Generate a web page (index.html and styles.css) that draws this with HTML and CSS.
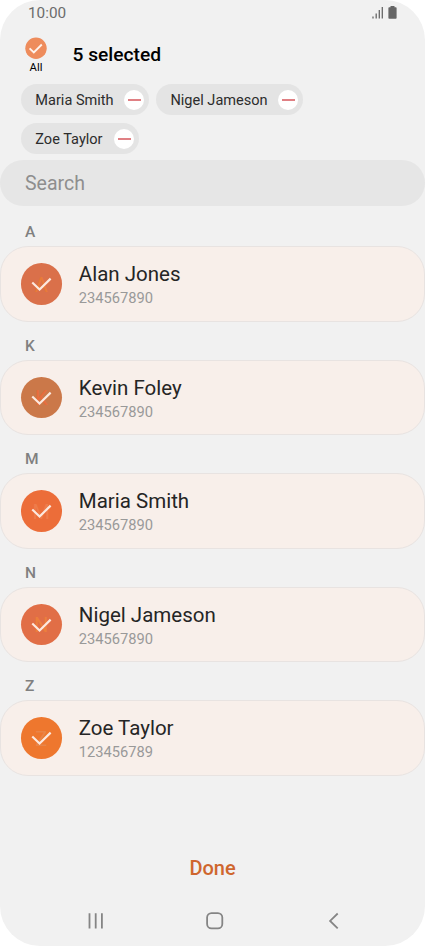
FILE: index.html
```html
<!DOCTYPE html>
<html lang="en">
<head>
<meta charset="utf-8">
<title>Select contacts</title>
<link rel="stylesheet" href="styles.css">
</head>
<body>
<main class="phone">
  <div class="status">
    <span class="time">10:00</span>
    <svg class="status-icons" width="26" height="14" viewBox="0 0 26 14">
      <path d="M1 10.5V12.5M4.2 7.5V12.5M7.3 4V12.5M10.3 1V12.5" stroke="#666" stroke-width="1.3" fill="none"/>
      <path d="M18.5 0h4v1.2h1.3q.8 0 .8.8v10q0 .8-.8.8h-6.6q-.8 0-.8-.8V2q0-.8.8-.8h1.3z" fill="#666"/>
    </svg>
  </div>
  <header class="header">
    <div class="all">
      <svg width="22" height="22" viewBox="0 0 22 22"><circle cx="11" cy="11.3" r="10.7" fill="#ee8c5c"/><path d="M4.6 11.4l4.2 4 8-7.9" fill="none" stroke="#fff3ec" stroke-width="1.9"/></svg>
      <span class="all-label">All</span>
    </div>
    <h1 class="title">5 selected</h1>
  </header>
  <div class="chips">
    <div class="chip"><span>Maria Smith</span><i class="remove"></i></div>
    <div class="chip"><span>Nigel Jameson</span><i class="remove"></i></div>
    <div class="chip"><span>Zoe Taylor</span><i class="remove"></i></div>
  </div>
  <div class="search">Search</div>
  <section class="group">
    <h2 class="letter">A</h2>
    <div class="card">
      <div class="avatar avatar-a"><span class="initial">A</span><svg class="check" viewBox="0 0 42 42"><path d="M11.4 19.7l7.4 7.1 11.2-11"/></svg></div>
      <div class="info"><div class="name">Alan Jones</div><div class="number">234567890</div></div>
    </div>
  </section>
  <section class="group">
    <h2 class="letter">K</h2>
    <div class="card">
      <div class="avatar avatar-k"><span class="initial">K</span><svg class="check" viewBox="0 0 42 42"><path d="M11.4 19.7l7.4 7.1 11.2-11"/></svg></div>
      <div class="info"><div class="name">Kevin Foley</div><div class="number">234567890</div></div>
    </div>
  </section>
  <section class="group">
    <h2 class="letter">M</h2>
    <div class="card">
      <div class="avatar avatar-m"><span class="initial">M</span><svg class="check" viewBox="0 0 42 42"><path d="M11.4 19.7l7.4 7.1 11.2-11"/></svg></div>
      <div class="info"><div class="name">Maria Smith</div><div class="number">234567890</div></div>
    </div>
  </section>
  <section class="group">
    <h2 class="letter">N</h2>
    <div class="card">
      <div class="avatar avatar-n"><span class="initial">N</span><svg class="check" viewBox="0 0 42 42"><path d="M11.4 19.7l7.4 7.1 11.2-11"/></svg></div>
      <div class="info"><div class="name">Nigel Jameson</div><div class="number">234567890</div></div>
    </div>
  </section>
  <section class="group">
    <h2 class="letter">Z</h2>
    <div class="card">
      <div class="avatar avatar-z"><span class="initial">Z</span><svg class="check" viewBox="0 0 42 42"><path d="M11.4 19.7l7.4 7.1 11.2-11"/></svg></div>
      <div class="info"><div class="name">Zoe Taylor</div><div class="number">123456789</div></div>
    </div>
  </section>
  <div class="done">Done</div>
  <nav class="nav">
    <svg width="20" height="20" viewBox="0 0 20 20"><path d="M3.5 2.2v15.2M9.7 2.2v15.2M15.9 2.2v15.2"/></svg>
    <svg width="20" height="20" viewBox="0 0 20 20"><rect x="2.1" y="2.2" width="15.2" height="15.2" rx="4.4"/></svg>
    <svg width="20" height="20" viewBox="0 0 20 20"><path d="M14.7 2.5L7.1 9.9l7.6 7.4"/></svg>
  </nav>
</main>
</body>
</html>
```
FILE: styles.css
```css
* { box-sizing: border-box; }
body {
  margin: 0;
  background: #fff;
  font-family: Roboto, "Liberation Sans", sans-serif;
}
.phone {
  display: flex;
  flex-direction: column;
  width: 425px;
  height: 946px;
  background: #f1f1f1;
  border-radius: 40px;
  overflow: hidden;
}
.status {
  display: flex;
  justify-content: space-between;
  align-items: center;
  height: 26px;
  padding: 0 27px 0 28px;
  color: #6c6c6c;
  font-size: 15.3px;
}
.header {
  display: flex;
  height: 58px;
  padding: 11px 0 0 25px;
}
.all {
  display: flex;
  flex-direction: column;
  align-items: center;
  width: 22px;
}
.all-label { font-size: 11.3px; line-height: 14px; margin-top: 1.6px; }
.title {
  margin: 0 0 0 25.5px;
  font-size: 19.2px;
  font-weight: 500;
  line-height: 35px;
}
.chips {
  display: flex;
  flex-wrap: wrap;
  gap: 8px 7px;
  padding: 0 21px;
  margin-bottom: 6px;
}
.chip {
  display: flex;
  align-items: center;
  gap: 10.5px;
  height: 31px;
  padding: 1px 5px 0 14.3px;
  border-radius: 16px;
  background: #e4e4e4;
  color: #2c2c2c;
  font-size: 14.55px;
}
.chip span { padding-top: 1px; }
.chip:last-child { gap: 11.5px; }
.remove {
  display: flex;
  align-items: center;
  justify-content: center;
  width: 20px;
  height: 20px;
  border-radius: 50%;
  background: #fff;
}
.remove::before {
  content: "";
  width: 13px;
  height: 2px;
  background: #e08084;
}
.search {
  height: 46px;
  padding-left: 25px;
  border-radius: 23px;
  background: #e6e6e6;
  color: #8e8e8e;
  font-size: 19.5px;
  line-height: 48px;
}
.group { height: 113.5px; padding-top: 40px; flex: none; }
.letter {
  height: 40px;
  margin: -40px 0 0;
  padding-left: 25px;
  color: #808080;
  font-size: 15.5px;
  font-weight: 500;
  line-height: 52px;
}
.card {
  display: flex;
  align-items: center;
  height: 75.5px;
  padding-left: 19.5px;
  border: 1px solid #e8e3e1;
  border-radius: 28px;
  background: #f8efea;
}
.avatar {
  display: grid;
  place-items: center;
  width: 41.5px;
  height: 41.5px;
  border-radius: 50%;
  font-size: 20px;
}
.avatar > * { grid-area: 1 / 1; }
.initial { padding-top: 2px; }
.avatar-a { background: #da704a; color: #e87b38; }
.avatar-k { background: #cb7849; color: #e86c3c; }
.avatar-m { background: #ec6d39; color: #ee7c4a; }
.avatar-n { background: #e16e46; color: #ec7f3c; }
.avatar-z { background: #ee772e; color: #e88548; }
.check { width: 41.5px; height: 41.5px; fill: none; stroke: #fce9df; stroke-width: 2.2; }
.info { margin-left: 16.8px; padding-top: 3.8px; }
.name { color: #252525; font-size: 20.5px; line-height: 25px; }
.number { color: #999; font-size: 14.7px; line-height: 22px; }
.done {
  margin-top: 79px;
  color: #cf662e;
  font-size: 20px;
  font-weight: 500;
  line-height: 30px;
  text-align: center;
}
.nav {
  display: flex;
  justify-content: space-between;
  margin-top: 28px;
  padding: 0 82px 0 86px;
}
.nav svg { fill: none; stroke: #858585; stroke-width: 1.8; }
```
